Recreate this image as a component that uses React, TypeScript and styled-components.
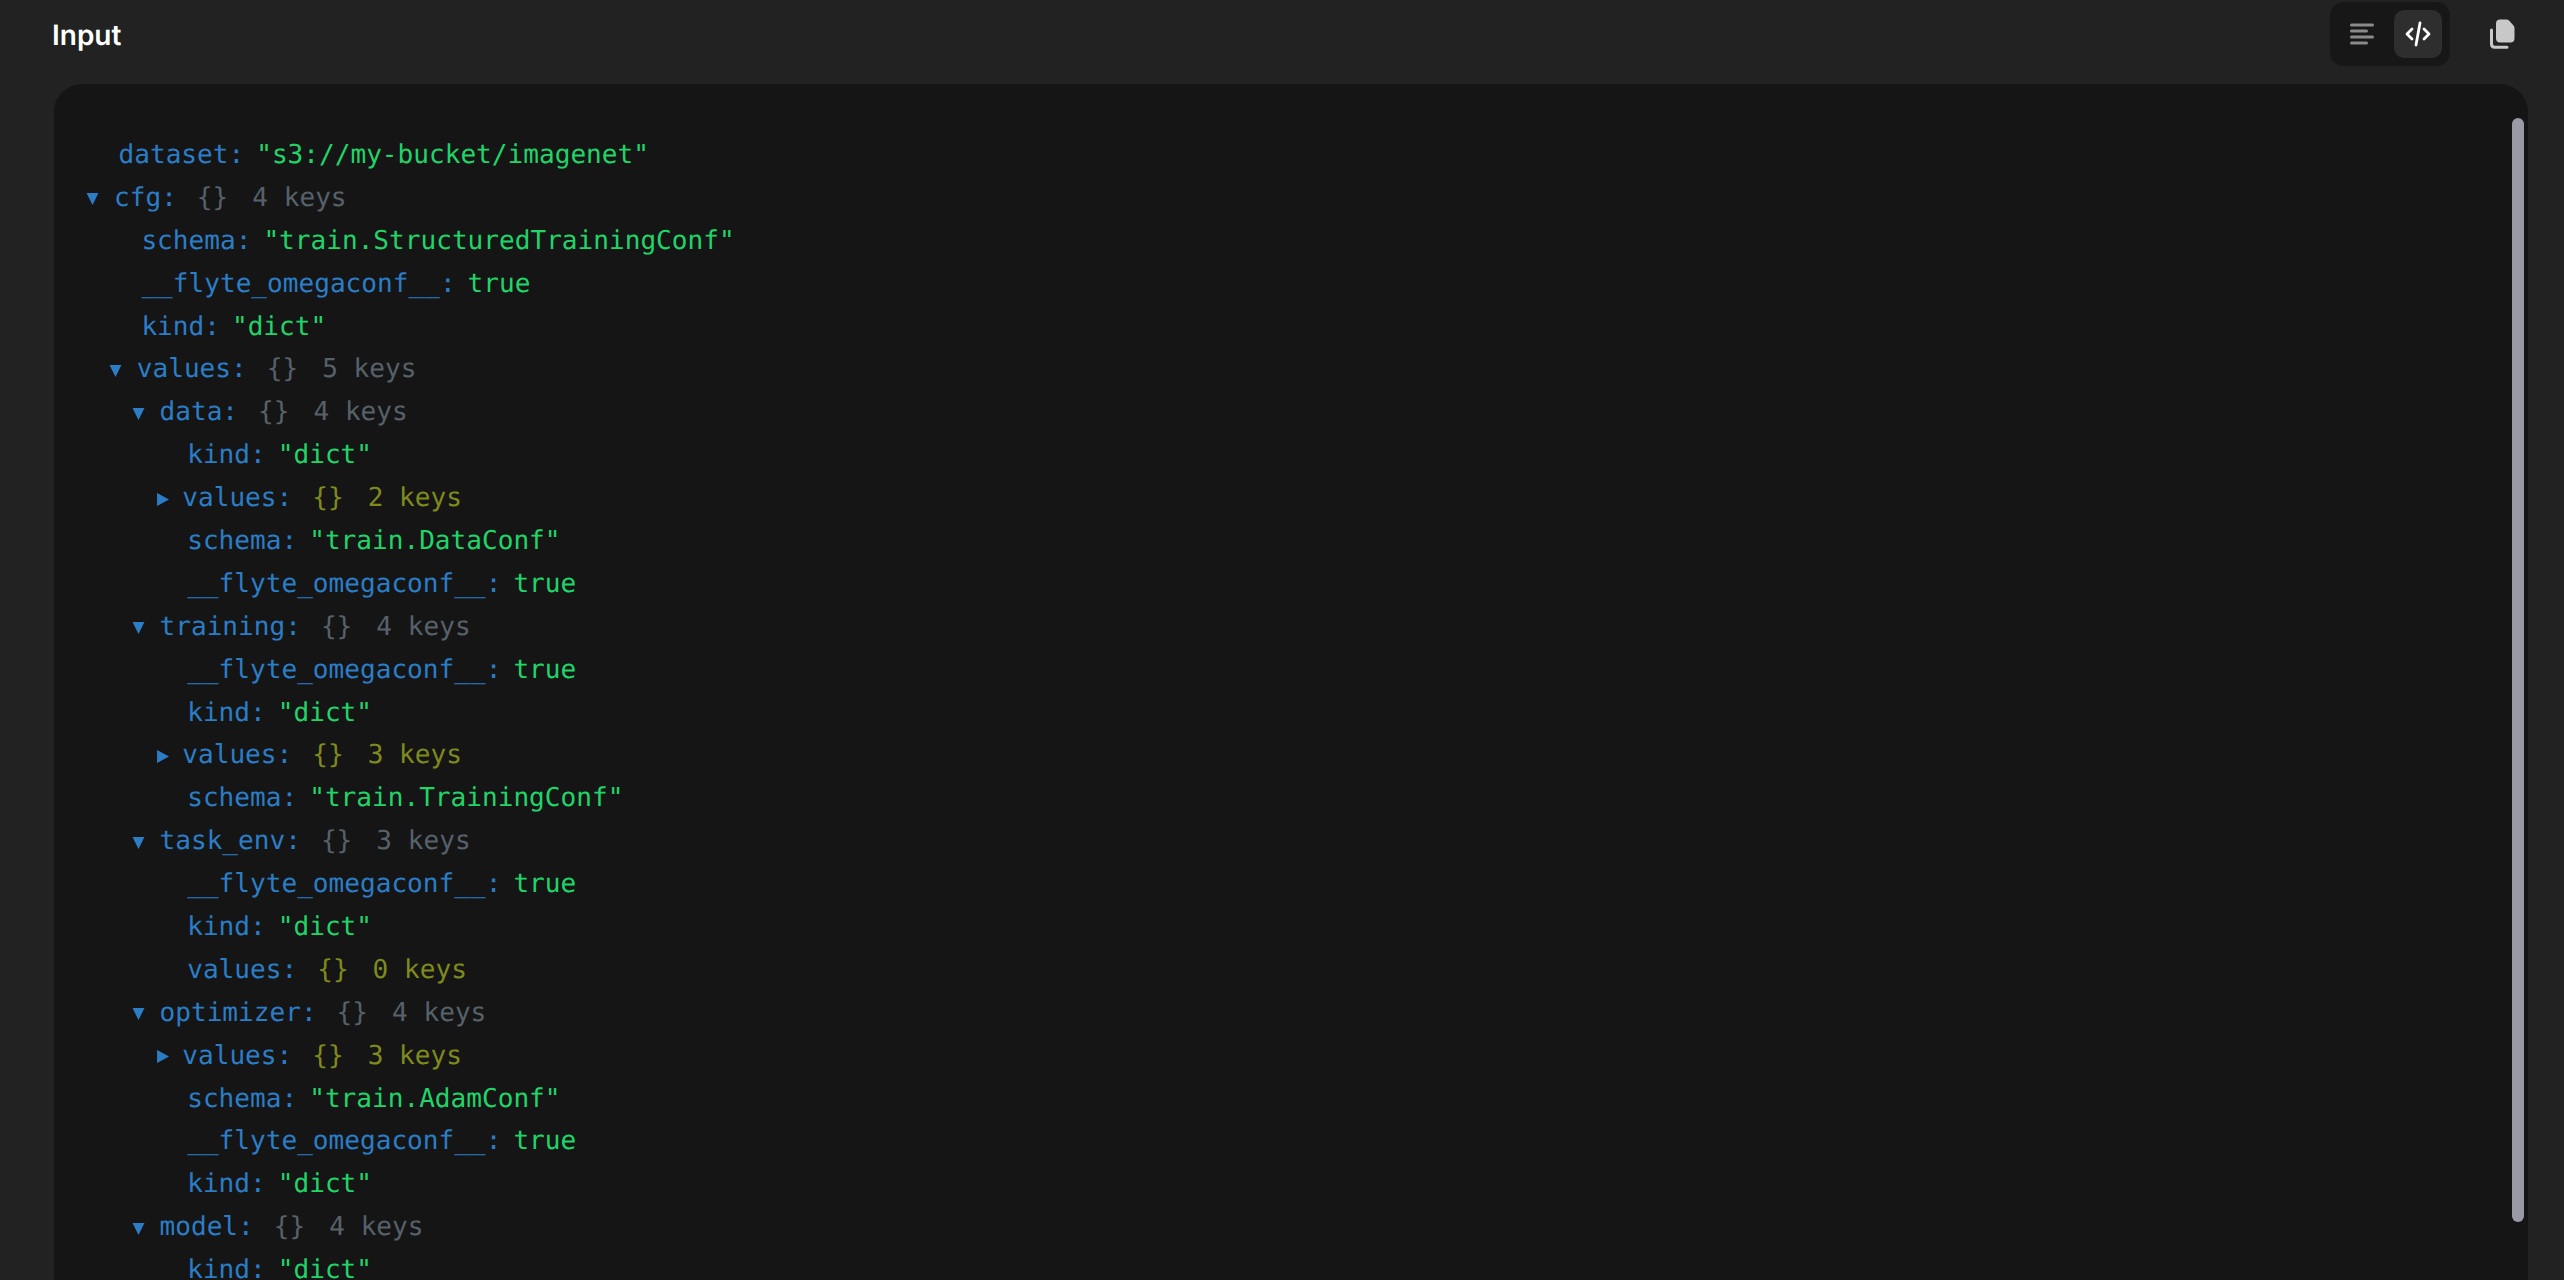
import styled, { createGlobalStyle } from 'styled-components';

type Row = {
  depth: number;
  name: string;
  text?: string;
  keys?: number;
  open?: boolean;
  olive?: boolean;
};

const flyte = (depth: number): Row => ({ depth, name: '__flyte_omegaconf__', text: 'true' });
const kind = (depth: number): Row => ({ depth, name: 'kind', text: '"dict"' });

const rows: Row[] = [
  { depth: 0, name: 'dataset', text: '"s3://my-bucket/imagenet"' },
  { depth: 0, name: 'cfg', keys: 4, open: true },
  { depth: 1, name: 'schema', text: '"train.StructuredTrainingConf"' },
  flyte(1),
  kind(1),
  { depth: 1, name: 'values', keys: 5, open: true },
  { depth: 2, name: 'data', keys: 4, open: true },
  kind(3),
  { depth: 3, name: 'values', keys: 2, open: false },
  { depth: 3, name: 'schema', text: '"train.DataConf"' },
  flyte(3),
  { depth: 2, name: 'training', keys: 4, open: true },
  flyte(3),
  kind(3),
  { depth: 3, name: 'values', keys: 3, open: false },
  { depth: 3, name: 'schema', text: '"train.TrainingConf"' },
  { depth: 2, name: 'task_env', keys: 3, open: true },
  flyte(3),
  kind(3),
  { depth: 3, name: 'values', keys: 0, olive: true },
  { depth: 2, name: 'optimizer', keys: 4, open: true },
  { depth: 3, name: 'values', keys: 3, open: false },
  { depth: 3, name: 'schema', text: '"train.AdamConf"' },
  flyte(3),
  kind(3),
  { depth: 2, name: 'model', keys: 4, open: true },
  kind(3),
];

const GlobalStyle = createGlobalStyle`
  html, body {
    margin: 0;
    height: 100%;
    background: #222222;
    overflow: hidden;
    text-rendering: geometricPrecision;
  }
`;

const Page = styled.div`
  height: 1280px;
  display: flex;
  flex-direction: column;
  padding: 0 36px 0 54px;
  box-sizing: border-box;
  overflow: hidden;
`;

const Header = styled.header`
  height: 84px;
  flex: none;
  display: flex;
  align-items: flex-start;
  justify-content: space-between;
`;

const Title = styled.h2`
  margin: 15px 0 0 -2px;
  color: #ffffff;
  font-family: Inter, 'Liberation Sans', sans-serif;
  font-size: 28px;
  line-height: 40px;
  font-weight: 600;
`;

const Actions = styled.div`
  display: flex;
  align-items: flex-start;
  gap: 40px;
  margin: 2px 13px 0 0;
`;

const Toggle = styled.div`
  width: 120px;
  height: 64px;
  box-sizing: border-box;
  padding: 8px;
  display: flex;
  gap: 8px;
  background: #171717;
  border-radius: 14px;
`;

const ToggleButton = styled.div<{ $active?: boolean }>`
  width: 48px;
  height: 48px;
  display: flex;
  align-items: center;
  justify-content: center;
  border-radius: 10px;
  background: ${(p) => (p.$active ? '#2e2e2e' : 'transparent')};
`;

const CopyButton = styled.div`
  width: 25px;
  height: 30px;
  margin-top: 17px;
  display: flex;
`;

const Panel = styled.section`
  position: relative;
  flex: 1;
  min-height: 0;
  padding: 49.5px 0 0;
  background: #151515;
  border-radius: 28px 28px 0 0;
  overflow: hidden;
`;

const Scrollbar = styled.div`
  position: absolute;
  top: 34px;
  right: 4px;
  width: 12px;
  height: 1104px;
  border-radius: 6px;
  background: #9a9aa6;
`;

const Line = styled.div<{ $depth: number; $node: boolean }>`
  display: flex;
  align-items: center;
  height: 42.9px;
  padding-left: ${(p) => (p.$node ? 32 + p.$depth * 22.75 : 64.5 + p.$depth * 22.9)}px;
  font-family: 'DejaVu Sans Mono', 'Liberation Mono', monospace;
  font-size: 26.1px;
  white-space: pre;
`;

const Arrow = styled.svg<{ $open: boolean }>`
  width: 13px;
  height: 13px;
  flex: none;
  margin: 2px ${(p) => (p.$open ? 15 : 13)}px 0 ${(p) => (p.$open ? 0 : 2)}px;
`;

const Key = styled.span`
  color: #2b7dc6;
`;

const Value = styled.span`
  margin-left: 12px;
  color: #20d468;
`;

const Meta = styled.span<{ $olive: boolean }>`
  margin-left: 20px;
  display: inline-flex;
  gap: 24px;
  color: ${(p) => (p.$olive ? '#7f8a1d' : '#56616a')};
`;

function TreeRow({ row }: { row: Row }) {
  const isNode = row.open !== undefined;
  return (
    <Line $depth={row.depth} $node={isNode}>
      {isNode && (
        <Arrow $open={!!row.open} viewBox="0 0 12 12">
          <polygon points={row.open ? '0.5,1 11.5,1 6,12' : '1,0 12,6 1,12'} fill="#2b7dc6" />
        </Arrow>
      )}
      <Key>{row.name}:</Key>
      {row.text !== undefined ? (
        <Value>{row.text}</Value>
      ) : (
        <Meta $olive={row.open === false || !!row.olive}>
          <span>{'{}'}</span>
          <span>{row.keys} keys</span>
        </Meta>
      )}
    </Line>
  );
}

export default function App() {
  return (
    <>
      <GlobalStyle />
      <Page>
        <Header>
          <Title>Input</Title>
          <Actions>
            <Toggle>
              <ToggleButton>
                <svg width="26" height="26" viewBox="0 0 26 26" fill="none" stroke="#8a8a8a" strokeWidth="3" strokeLinecap="round">
                  <path d="M2.500 4h21M2.500 10h15M2.500 16h21M2.500 22h15" />
                </svg>
              </ToggleButton>
              <ToggleButton $active>
                <svg width="26" height="26" viewBox="0 0 26 26" fill="none" stroke="#ffffff" strokeWidth="2.800" strokeLinecap="round" strokeLinejoin="round">
                  <path d="M7 8 2 13l5 5M19 8l5 5-5 5M15 2l-4 22" />
                </svg>
              </ToggleButton>
            </Toggle>
            <CopyButton>
              <svg width="25" height="30" viewBox="0 0 25 30">
                <path d="M6 4.500C6 2 7.500 .5 10 .5h6.500c1 0 1.800.4 2.500 1l4.500 5c.7.7 1 1.500 1 2.500v10.500c0 2.500-1.500 4-4 4H10c-2.500 0-4-1.500-4-4Z" fill="#c8c8c8" />
                <path d="M1.500 11v14c0 2 1.300 3.300 3.300 3.300H17" fill="none" stroke="#c8c8c8" strokeWidth="3" strokeLinecap="round" />
              </svg>
            </CopyButton>
          </Actions>
        </Header>
        <Panel>
          <Scrollbar />
          {rows.map((row, i) => (
            <TreeRow key={i} row={row} />
          ))}
        </Panel>
      </Page>
    </>
  );
}
